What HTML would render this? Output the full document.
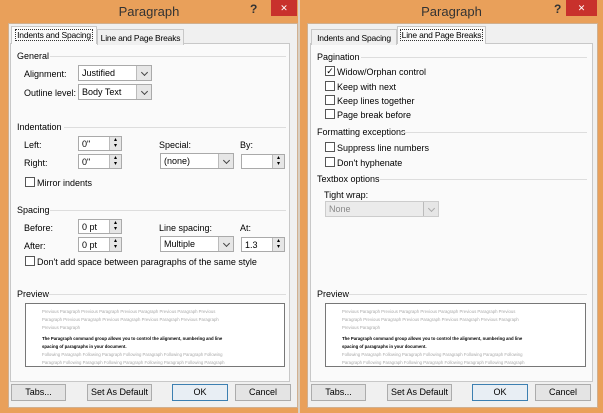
<!DOCTYPE html>
<html><head><style>
*{margin:0;padding:0;box-sizing:border-box}
body{width:603px;height:413px;background:#e9a05a;font-family:"Liberation Sans",sans-serif;font-size:9px;color:#000;position:relative;overflow:hidden}
.dlg{position:absolute;top:0;height:413px;background:#e9a05a}
.title{position:absolute;top:4px;left:0;right:0;text-align:center;font-size:13px;color:#333}
.help{position:absolute;top:2px;font-size:12px;font-weight:bold;color:#333}
.close{position:absolute;top:0;width:26px;height:16px;background:#c8312c;color:#fff;text-align:center;font-size:9px;line-height:16px}
.inner{position:absolute;top:23px;bottom:5px;background:#f0f0f0;border:1px solid #d0b090}
.a{position:absolute;white-space:nowrap}
.panel{position:absolute;background:#fafafa;border:1px solid #c8c8c8}
.tab{position:absolute;height:16px;border:1px solid #c8c8c8;border-bottom:none;background:#f0f0f0;padding:3px 0 0;font-size:8.5px;letter-spacing:-0.2px;text-align:center;white-space:nowrap}
.tab.on{background:#fafafa;height:18px}
.tab.on span{outline:1px dotted #333;padding:0 1px}
.hr{position:absolute;height:1px;background:#ddd}
.sel{position:absolute;height:16px;border:1px solid #aaa;background:#fff;padding:2px 3px;font-size:9px}
.sel:after{content:"";position:absolute;right:0;top:0;width:14px;height:14px;background:#e6e6e6;border-left:1px solid #bbb}
.sel i{position:absolute;right:4px;top:4px;width:5px;height:5px;border-right:1px solid #444;border-bottom:1px solid #444;transform:rotate(45deg);z-index:1}
.spin{position:absolute;height:15px;border:1px solid #aaa;background:#fff;padding:2px 3px;font-size:9px}
.spin:after{content:"▴\A▾";white-space:pre;position:absolute;right:0;top:0;width:11px;height:13px;background:#e6e6e6;border-left:1px solid #bbb;font-size:6px;line-height:6px;text-align:center}
.cb{position:absolute;width:10px;height:10px;border:1px solid #555;background:#fff}
.btn{position:absolute;height:17px;border:1px solid #acacac;background:#e4e4e4;text-align:center;line-height:15px;font-size:9px}
.btn.ok{border-color:#3c7fb1;background:#e8eef4}
.prev{position:absolute;border:1px solid #777;background:#fff;overflow:hidden;font-size:4.3px;line-height:8px;padding:4px 16px}
.g{color:#aaa}.b{font-weight:bold;color:#000}
</style></head><body>

<!-- LEFT -->
<div class="dlg" style="left:0;width:298px">
<div class="title">Paragraph</div>
<div class="help" style="left:250px">?</div>
<div class="close" style="left:271px">✕</div>
<div class="inner" style="left:8px;right:0px"></div>
<div class="panel" style="left:10px;top:43px;width:280px;height:339px"></div>
<div class="tab on" style="left:11px;top:26px;width:86px"><span>Indents and Spacing</span></div>
<div class="tab" style="left:97px;top:29px;width:87px">Line and Page Breaks</div>

<div class="a" style="left:17px;top:51px">General</div><div class="hr" style="left:50px;top:56px;width:236px"></div>
<div class="a" style="left:24px;top:69px">Alignment:</div>
<div class="sel" style="left:78px;top:65px;width:74px">Justified<i></i></div>
<div class="a" style="left:24px;top:88px">Outline level:</div>
<div class="sel" style="left:78px;top:84px;width:74px">Body Text<i></i></div>

<div class="a" style="left:17px;top:122px">Indentation</div><div class="hr" style="left:64px;top:127px;width:222px"></div>
<div class="a" style="left:24px;top:140px">Left:</div>
<div class="spin" style="left:78px;top:136px;width:44px">0"</div>
<div class="a" style="left:24px;top:158px">Right:</div>
<div class="spin" style="left:78px;top:154px;width:44px">0"</div>
<div class="a" style="left:159px;top:140px">Special:</div>
<div class="sel" style="left:160px;top:153px;width:74px">(none)<i></i></div>
<div class="a" style="left:240px;top:140px">By:</div>
<div class="spin" style="left:241px;top:154px;width:44px"></div>
<div class="cb" style="left:25px;top:177px"></div><div class="a" style="left:37px;top:178px">Mirror indents</div>

<div class="a" style="left:17px;top:205px">Spacing</div><div class="hr" style="left:50px;top:210px;width:236px"></div>
<div class="a" style="left:24px;top:223px">Before:</div>
<div class="spin" style="left:78px;top:219px;width:44px">0 pt</div>
<div class="a" style="left:24px;top:241px">After:</div>
<div class="spin" style="left:78px;top:237px;width:44px">0 pt</div>
<div class="a" style="left:159px;top:223px">Line spacing:</div>
<div class="sel" style="left:160px;top:236px;width:74px">Multiple<i></i></div>
<div class="a" style="left:240px;top:223px">At:</div>
<div class="spin" style="left:241px;top:237px;width:44px">1.3</div>
<div class="cb" style="left:25px;top:256px"></div><div class="a" style="left:37px;top:257px">Don't add space between paragraphs of the same style</div>

<div class="a" style="left:17px;top:289px">Preview</div><div class="hr" style="left:48px;top:294px;width:238px"></div>
<div class="prev" style="left:25px;top:303px;width:260px;height:64px">
<div class="g">Previous Paragraph Previous Paragraph Previous Paragraph Previous Paragraph Previous<br>Paragraph Previous Paragraph Previous Paragraph Previous Paragraph Previous Paragraph<br>Previous Paragraph</div>
<div class="b" style="margin-top:3px">The Paragraph command group allows you to control the alignment, numbering and line<br>spacing of paragraphs in your document.</div>
<div class="g">Following Paragraph Following Paragraph Following Paragraph Following Paragraph Following<br>Paragraph Following Paragraph Following Paragraph Following Paragraph Following Paragraph</div>
</div>

<div class="btn" style="left:11px;top:384px;width:55px">Tabs...</div>
<div class="btn" style="left:87px;top:384px;width:65px">Set As Default</div>
<div class="btn ok" style="left:172px;top:384px;width:56px">OK</div>
<div class="btn" style="left:235px;top:384px;width:56px">Cancel</div>
</div>

<div style="position:absolute;left:298px;top:0;width:2px;height:413px;background:#d9d0c4"></div>

<!-- RIGHT -->
<div class="dlg" style="left:300px;width:303px">
<div class="title">Paragraph</div>
<div class="help" style="left:254px">?</div>
<div class="close" style="left:266px;width:31px">✕</div>
<div class="inner" style="left:7px;right:5px"></div>
<div class="panel" style="left:10px;top:43px;width:283px;height:339px"></div>
<div class="tab" style="left:11px;top:29px;width:86px">Indents and Spacing</div>
<div class="tab on" style="left:97px;top:26px;width:89px"><span>Line and Page Breaks</span></div>

<div class="a" style="left:17px;top:52px">Pagination</div><div class="hr" style="left:61px;top:57px;width:226px"></div>
<div class="cb" style="left:25px;top:66px;font-size:9px;line-height:8px;text-align:center">✓</div><div class="a" style="left:37px;top:67px">Widow/Orphan control</div>
<div class="cb" style="left:25px;top:81px"></div><div class="a" style="left:37px;top:82px">Keep with next</div>
<div class="cb" style="left:25px;top:95px"></div><div class="a" style="left:37px;top:96px">Keep lines together</div>
<div class="cb" style="left:25px;top:109px"></div><div class="a" style="left:37px;top:110px">Page break before</div>
<div class="a" style="left:17px;top:127px">Formatting exceptions</div><div class="hr" style="left:102px;top:132px;width:185px"></div>
<div class="cb" style="left:25px;top:142px"></div><div class="a" style="left:37px;top:143px">Suppress line numbers</div>
<div class="cb" style="left:25px;top:157px"></div><div class="a" style="left:37px;top:158px">Don't hyphenate</div>
<div class="a" style="left:17px;top:174px">Textbox options</div><div class="hr" style="left:80px;top:179px;width:207px"></div>
<div class="a" style="left:24px;top:190px">Tight wrap:</div>
<div class="sel" style="left:25px;top:201px;width:114px;background:#ebebeb;color:#888;border-color:#ccc">None<i style="border-color:#aaa"></i></div>

<div class="a" style="left:17px;top:289px">Preview</div><div class="hr" style="left:48px;top:294px;width:239px"></div>
<div class="prev" style="left:25px;top:303px;width:261px;height:64px">
<div class="g">Previous Paragraph Previous Paragraph Previous Paragraph Previous Paragraph Previous<br>Paragraph Previous Paragraph Previous Paragraph Previous Paragraph Previous Paragraph<br>Previous Paragraph</div>
<div class="b" style="margin-top:3px">The Paragraph command group allows you to control the alignment, numbering and line<br>spacing of paragraphs in your document.</div>
<div class="g">Following Paragraph Following Paragraph Following Paragraph Following Paragraph Following<br>Paragraph Following Paragraph Following Paragraph Following Paragraph Following Paragraph</div>
</div>

<div class="btn" style="left:11px;top:384px;width:55px">Tabs...</div>
<div class="btn" style="left:87px;top:384px;width:65px">Set As Default</div>
<div class="btn ok" style="left:172px;top:384px;width:56px">OK</div>
<div class="btn" style="left:235px;top:384px;width:56px">Cancel</div>
</div>
</body></html>
